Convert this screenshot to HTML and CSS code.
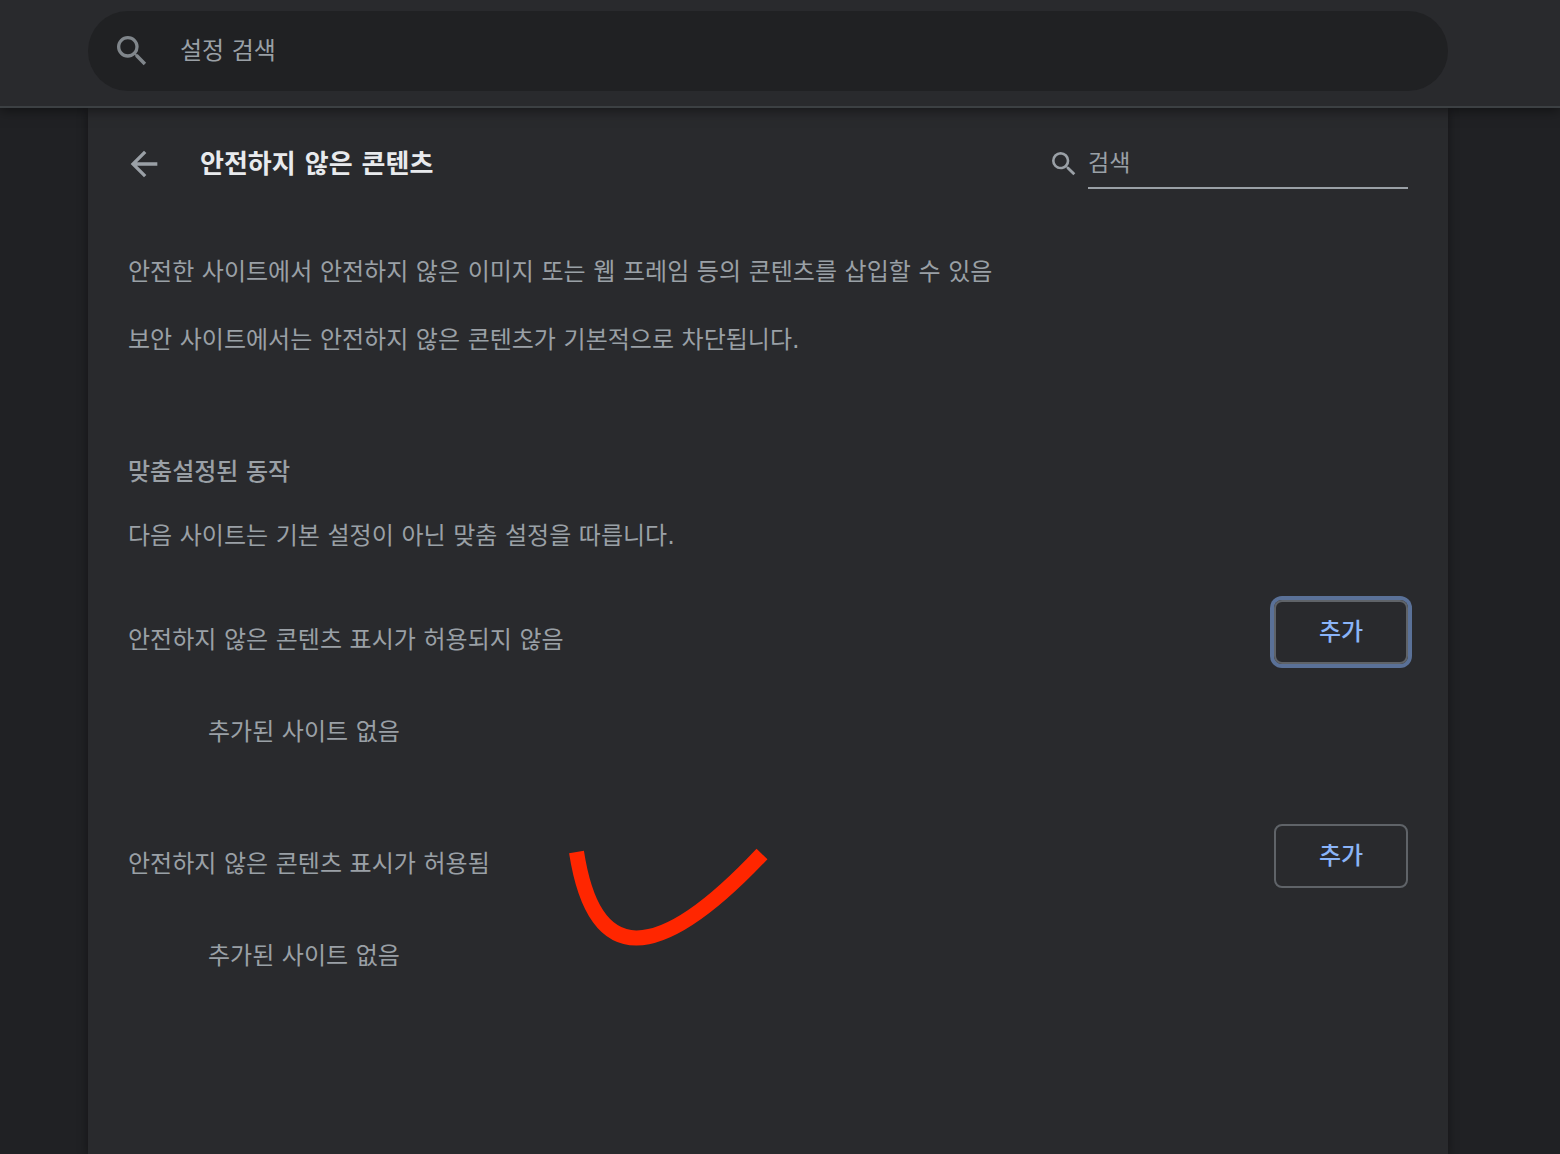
FILE: index.html
```html
<!DOCTYPE html>
<html lang="ko">
<head>
	<meta charset="utf-8">
	<title>설정 - 안전하지 않은 콘텐츠</title>
	<link rel="stylesheet" href="styles.css">
</head>
<body>
<header class="toolbar">
	<div class="search-box">
		<svg class="icon" viewBox="0 0 24 24" aria-hidden="true"><path d="M15.5 14h-.79l-.28-.27A6.471 6.471 0 0 0 16 9.5 6.5 6.5 0 1 0 9.5 16c1.61 0 3.09-.59 4.23-1.57l.27.28v.79l5 4.99L20.49 19l-4.99-5zm-6 0C7.01 14 5 11.99 5 9.5S7.01 5 9.5 5 14 7.01 14 9.5 11.99 14 9.5 14z"/></svg>
		<input type="text" placeholder="설정 검색" aria-label="설정 검색">
	</div>
</header>
<main class="panel">
	<div class="page-head">
		<button type="button" class="back" aria-label="뒤로">
			<svg class="icon" viewBox="0 0 24 24" aria-hidden="true"><path d="M20 11H7.83l5.59-5.59L12 4l-8 8 8 8 1.41-1.41L7.83 13H20v-2z"/></svg>
		</button>
		<h1>안전하지 않은 콘텐츠</h1>
		<div class="page-search">
			<svg class="icon" viewBox="0 0 24 24" aria-hidden="true"><path d="M15.5 14h-.79l-.28-.27A6.471 6.471 0 0 0 16 9.5 6.5 6.5 0 1 0 9.5 16c1.61 0 3.09-.59 4.23-1.57l.27.28v.79l5 4.99L20.49 19l-4.99-5zm-6 0C7.01 14 5 11.99 5 9.5S7.01 5 9.5 5 14 7.01 14 9.5 11.99 14 9.5 14z"/></svg>
			<input type="text" placeholder="검색" aria-label="검색">
		</div>
	</div>

	<section class="intro">
		<p>안전한 사이트에서 안전하지 않은 이미지 또는 웹 프레임 등의 콘텐츠를 삽입할 수 있음</p>
		<p>보안 사이트에서는 안전하지 않은 콘텐츠가 기본적으로 차단됩니다.</p>
	</section>

	<section class="custom">
		<h2>맞춤설정된 동작</h2>
		<p>다음 사이트는 기본 설정이 아닌 맞춤 설정을 따릅니다.</p>
	</section>

	<section class="site-list">
		<div class="list-head">
			<h3>안전하지 않은 콘텐츠 표시가 허용되지 않음</h3>
			<button type="button" class="add focused">추가</button>
		</div>
		<p class="empty">추가된 사이트 없음</p>
	</section>

	<section class="site-list">
		<div class="list-head">
			<h3>안전하지 않은 콘텐츠 표시가 허용됨</h3>
			<button type="button" class="add">추가</button>
		</div>
		<p class="empty">추가된 사이트 없음</p>
		<!-- hand drawn check mark -->
		<svg class="mark" viewBox="0 0 220 140" aria-hidden="true"><path d="M16.500 28Q43 199 202 30"/></svg>
	</section>
</main>
</body>
</html>
```
FILE: styles.css
```css
* {
	box-sizing: border-box;
}

body {
	margin: 0;
	min-height: 100vh;
	display: flex;
	flex-direction: column;
	background: #202124;
	color: #9aa0a6;
	font-family: "DejaVu Sans", "Noto Sans CJK KR", sans-serif;
	font-size: 24px;
	line-height: 40px;
}

h1, h2, h3, p {
	margin: 0;
	font-size: 24px;
	font-weight: 400;
}

input, button {
	font-family: inherit;
	border: 0;
	background: none;
	padding: 0;
}

input {
	color: #e8eaed;
	outline: none;
	min-width: 0;
}

input::placeholder {
	color: #9aa0a6;
	opacity: 1;
}

.icon {
	display: block;
	flex: none;
	width: 40px;
	height: 40px;
	fill: #9aa0a6;
}

.toolbar {
	position: relative;
	z-index: 1;
	padding: 11px 112px 15px 88px;
	background: #292a2d;
	border-bottom: 2px solid #3c4043;
	box-shadow: 0 2px 12px rgba(0, 0, 0, 0.5);
}

.search-box {
	display: flex;
	align-items: center;
	gap: 28px;
	height: 80px;
	padding: 0 24px;
	border-radius: 40px;
	background: #202123;
}

.search-box .icon {
	fill: #80868b;
}

.search-box input {
	flex: 1;
	height: 40px;
	font-size: 24px;
	line-height: 40px;
}

.panel {
	flex: 1;
	margin: 0 112px 0 88px;
	padding: 0 40px;
	background: #292a2d;
	box-shadow: 0 2px 10px rgba(0, 0, 0, 0.4);
}

.page-head {
	display: flex;
	align-items: center;
	height: 112px;
}

.back {
	margin: 0 36px 0 -4px;
	cursor: pointer;
}

.page-head h1 {
	flex: 1;
	color: #e8eaed;
	font-size: 26px;
	font-weight: 600;
}

.page-search {
	display: flex;
	align-items: center;
	gap: 8px;
}

.page-search .icon {
	width: 32px;
	height: 32px;
}

.page-search input {
	width: 320px;
	height: 50px;
	border-bottom: 2px solid #9aa0a6;
	font-size: 23px;
	line-height: 40px;
}

.intro {
	display: grid;
	gap: 28px;
	padding-top: 32px;
}

.custom {
	display: grid;
	gap: 24px;
	padding: 92px 0 44px;
}

.custom h2 {
	font-weight: 500;
}

.site-list {
	position: relative;
	margin-bottom: 40px;
}

.list-head {
	display: flex;
	align-items: center;
	justify-content: space-between;
	height: 80px;
}

.add {
	align-self: flex-start;
	width: 134px;
	height: 64px;
	border: 2px solid #5f6368;
	border-radius: 8px;
	color: #8ab4f8;
	font-size: 24px;
	font-weight: 500;
	line-height: 40px;
	cursor: pointer;
}

.add.focused {
	box-shadow: 0 0 0 4px #5a7198;
}

.empty {
	padding: 32px 80px;
}

.mark {
	position: absolute;
	top: 0;
	left: 432px;
	width: 220px;
	height: 140px;
	fill: none;
	stroke: #ff2600;
	stroke-width: 15px;
}
```
